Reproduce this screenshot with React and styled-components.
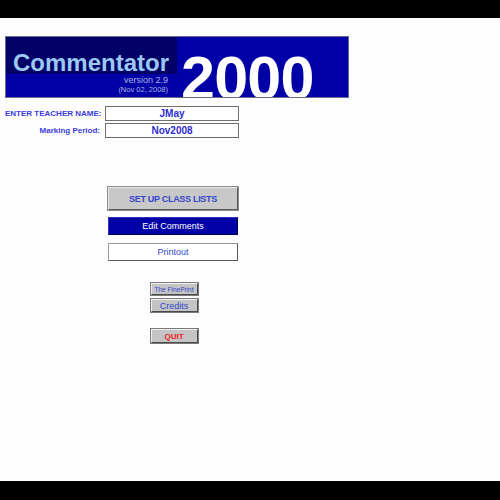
import React from 'react';
import styled, { createGlobalStyle } from 'styled-components';

// =============================================
// GLOBAL
// =============================================
const GlobalStyle = createGlobalStyle`
  html, body {
    margin: 0;
    padding: 0;
    background: #000;
  }
  body {
    font-family: 'Liberation Sans', Arial, sans-serif;
  }
`;

const FIELDS = [
  { label: 'ENTER TEACHER NAME:', value: 'JMay' },
  { label: 'Marking Period:', value: 'Nov2008' },
];

const App = () => {
  return (
    <Screen>
      <GlobalStyle />
      <Letterbox />
      <Sheet>
        <Banner>
          <TitleColumn>
            <TitleBlock>Commentator</TitleBlock>
            <Version>version 2.9</Version>
            <VersionDate>(Nov 02, 2008)</VersionDate>
          </TitleColumn>
          <BigYear>2000</BigYear>
        </Banner>

        <Form>
          {FIELDS.map((f) => (
            <FormRow key={f.label}>
              <FieldLabel>{f.label}</FieldLabel>
              <FieldBox>{f.value}</FieldBox>
            </FormRow>
          ))}
        </Form>

        <Menu>
          <WideButton $variant="grey">SET UP CLASS LISTS</WideButton>
          <WideButton $variant="navy">Edit Comments</WideButton>
          <WideButton $variant="white">Printout</WideButton>

          <SmallButton $tiny $top={22}>The FinePrint</SmallButton>
          <SmallButton $top={4} $h={13}>Credits</SmallButton>
          <SmallButton $top={17} $h={14} $quit>QUIT</SmallButton>
        </Menu>
      </Sheet>
      <Letterbox $h={19} />
    </Screen>
  );
};

export default App;

// =============================================
// STYLES
// =============================================
const Screen = styled.div`
  width: 500px;
  height: 500px;
  display: flex;
  flex-direction: column;
  overflow: hidden;
`;

const Letterbox = styled.div`
  height: ${(p) => p.$h || 18}px;
  background: #000;
  flex-shrink: 0;
`;

const Sheet = styled.div`
  flex: 1;
  background: #fdfdfd;
  padding: 18px 0 0 5px;
  box-sizing: border-box;
`;

const Banner = styled.div`
  width: 344px;
  height: 62px;
  box-sizing: border-box;
  border: 1px solid #6a6a8a;
  background: #0000a6;
  display: flex;
  overflow: hidden;
`;

const TitleColumn = styled.div`
  width: 171px;
  flex-shrink: 0;
  display: flex;
  flex-direction: column;
  align-items: flex-end;
`;

const TitleBlock = styled.div`
  align-self: stretch;
  height: 37px;
  background: #000066;
  color: #9cc8f4;
  font-size: 24px;
  font-weight: bold;
  line-height: 24px;
  padding: 14px 0 0 7px;
  box-sizing: border-box;
  white-space: nowrap;
`;

const Version = styled.div`
  color: #aab4e4;
  font-size: 9px;
  line-height: 10px;
  margin: 1px 9px 0 0;
`;

const VersionDate = styled.div`
  color: #aab4e4;
  font-size: 7.5px;
  line-height: 10px;
  margin: 0 9px 0 0;
`;

const BigYear = styled.div`
  color: #fff;
  font-size: 61px;
  font-weight: bold;
  line-height: 61px;
  margin: 11px 0 0 4px;
  letter-spacing: -0.8px;
  white-space: nowrap;
`;

const Form = styled.div`
  display: flex;
  flex-direction: column;
  gap: 2px;
  margin-top: 8px;
`;

const FormRow = styled.div`
  display: flex;
  align-items: center;
  gap: 5px;
`;

const FieldLabel = styled.div`
  width: 95px;
  text-align: right;
  color: #3c3cdc;
  font-size: 8px;
  font-weight: bold;
  white-space: nowrap;
`;

const FieldBox = styled.div`
  width: 134px;
  height: 15px;
  box-sizing: border-box;
  border: 1px solid #6e6e6e;
  background: #fff;
  color: #2c2cd0;
  font-size: 10px;
  font-weight: bold;
  text-align: center;
  line-height: 13px;
`;

const VARIANTS = {
  grey: `
    height: 23px;
    margin-top: 49px;
    background: #c8c8c8;
    color: #3346cc;
    font-weight: bold;
    font-size: 9px;
    letter-spacing: -0.3px;
    border-color: #e8e8e8 #5a5a5a #5a5a5a #e8e8e8;
    box-shadow: 0 0 0 1px #8a8a8a;
  `,
  navy: `
    height: 18px;
    margin-top: 7px;
    background: #0000a6;
    color: #fff;
    font-size: 9px;
    border-color: #3030c0 #000050 #000050 #3030c0;
  `,
  white: `
    height: 18px;
    margin-top: 8px;
    background: #fff;
    color: #3346cc;
    font-size: 9px;
    border-color: #9a9a9a #5a5a5a #5a5a5a #9a9a9a;
  `,
};

const Menu = styled.div`
  width: 130px;
  margin-left: 103px;
  display: flex;
  flex-direction: column;
  align-items: center;
`;

const WideButton = styled.div`
  align-self: stretch;
  box-sizing: border-box;
  border: 1px solid;
  display: flex;
  align-items: center;
  justify-content: center;
  ${(p) => VARIANTS[p.$variant]}
`;

const SmallButton = styled.div`
  width: 47px;
  height: ${(p) => p.$h || 12}px;
  margin-top: ${(p) => p.$top}px;
  margin-left: 2px;
  box-sizing: border-box;
  background: #c4c4c4;
  border: 1px solid;
  border-color: #f0f0f0 #4a4a4a #4a4a4a #f0f0f0;
  box-shadow: 0 0 0 1px #7a7a7a;
  display: flex;
  align-items: center;
  justify-content: center;
  white-space: nowrap;
  color: ${(p) => (p.$quit ? '#ee2020' : '#3346cc')};
  font-size: ${(p) => (p.$tiny ? 6.5 : p.$quit ? 8 : 9)}px;
  font-weight: ${(p) => (p.$quit ? 'bold' : 'normal')};
`;
